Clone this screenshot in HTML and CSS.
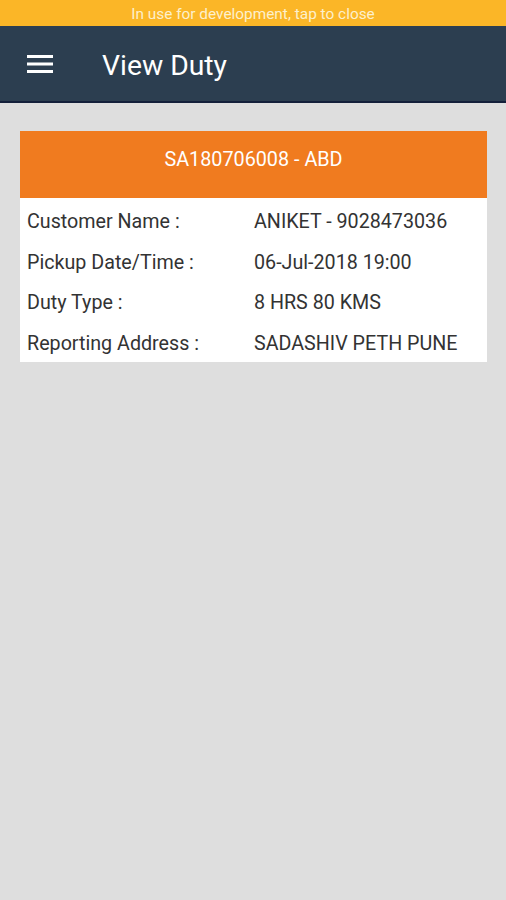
FILE: index.html
```html
<!DOCTYPE html>
<html lang="en">
<head>
    <meta charset="UTF-8">
    <title>View Duty</title>
    <link rel="stylesheet" href="styles.css">
</head>
<body>
    <div class="dev-bar">In use for development, tap to close</div>
    <div class="toolbar">
        <svg class="menu-icon" width="26" height="20" viewBox="0 0 26 20">
            <rect x="0" y="1" width="26" height="3" fill="#fff"/>
            <rect x="0" y="8.5" width="26" height="3" fill="#fff"/>
            <rect x="0" y="16" width="26" height="3" fill="#fff"/>
        </svg>
        <h1>View Duty</h1>
    </div>
    <div class="content">
        <div class="card">
            <div class="card-header">SA180706008 - ABD</div>
            <div class="card-body">
                <div class="row"><span class="label">Customer Name :</span><span class="value">ANIKET - 9028473036</span></div>
                <div class="row"><span class="label">Pickup Date/Time :</span><span class="value">06-Jul-2018 19:00</span></div>
                <div class="row"><span class="label">Duty Type :</span><span class="value">8 HRS 80 KMS</span></div>
                <div class="row"><span class="label">Reporting Address :</span><span class="value">SADASHIV PETH PUNE</span></div>
            </div>
        </div>
    </div>
</body>
</html>
```

FILE: styles.css
```css
body {
    margin: 0;
    font-family: Roboto, "Liberation Sans", sans-serif;
    background-color: #dedede;
    height: 900px;
}
.dev-bar {
    height: 26px;
    line-height: 29px;
    background-color: #fbb627;
    color: #fdf0cc;
    font-size: 15.4px;
    text-align: center;
}
.toolbar {
    height: 75px;
    background-color: #2c3e50;
    border-bottom: 2px solid #14203a;
    display: flex;
    align-items: center;
    padding-left: 27px;
}
.menu-icon {
    display: block;
}
.toolbar h1 {
    margin: 3px 0 0 49px;
    font-size: 28.3px;
    font-weight: 400;
    color: #fff;
}
.content {
    padding: 28px 19px 0 20px;
}
.card {
    background-color: #fff;
}
.card-header {
    height: 67px;
    line-height: 57px;
    background-color: #f07b1f;
    color: #fff;
    font-size: 19.8px;
    text-align: center;
}
.card-body {
    padding-top: 2px;
}
.row {
    display: flex;
    box-sizing: border-box;
    height: 40.5px;
    padding-top: 3px;
    align-items: center;
    font-size: 19.7px;
    color: #333;
}
.label {
    width: 227px;
    padding-left: 7px;
}
```
